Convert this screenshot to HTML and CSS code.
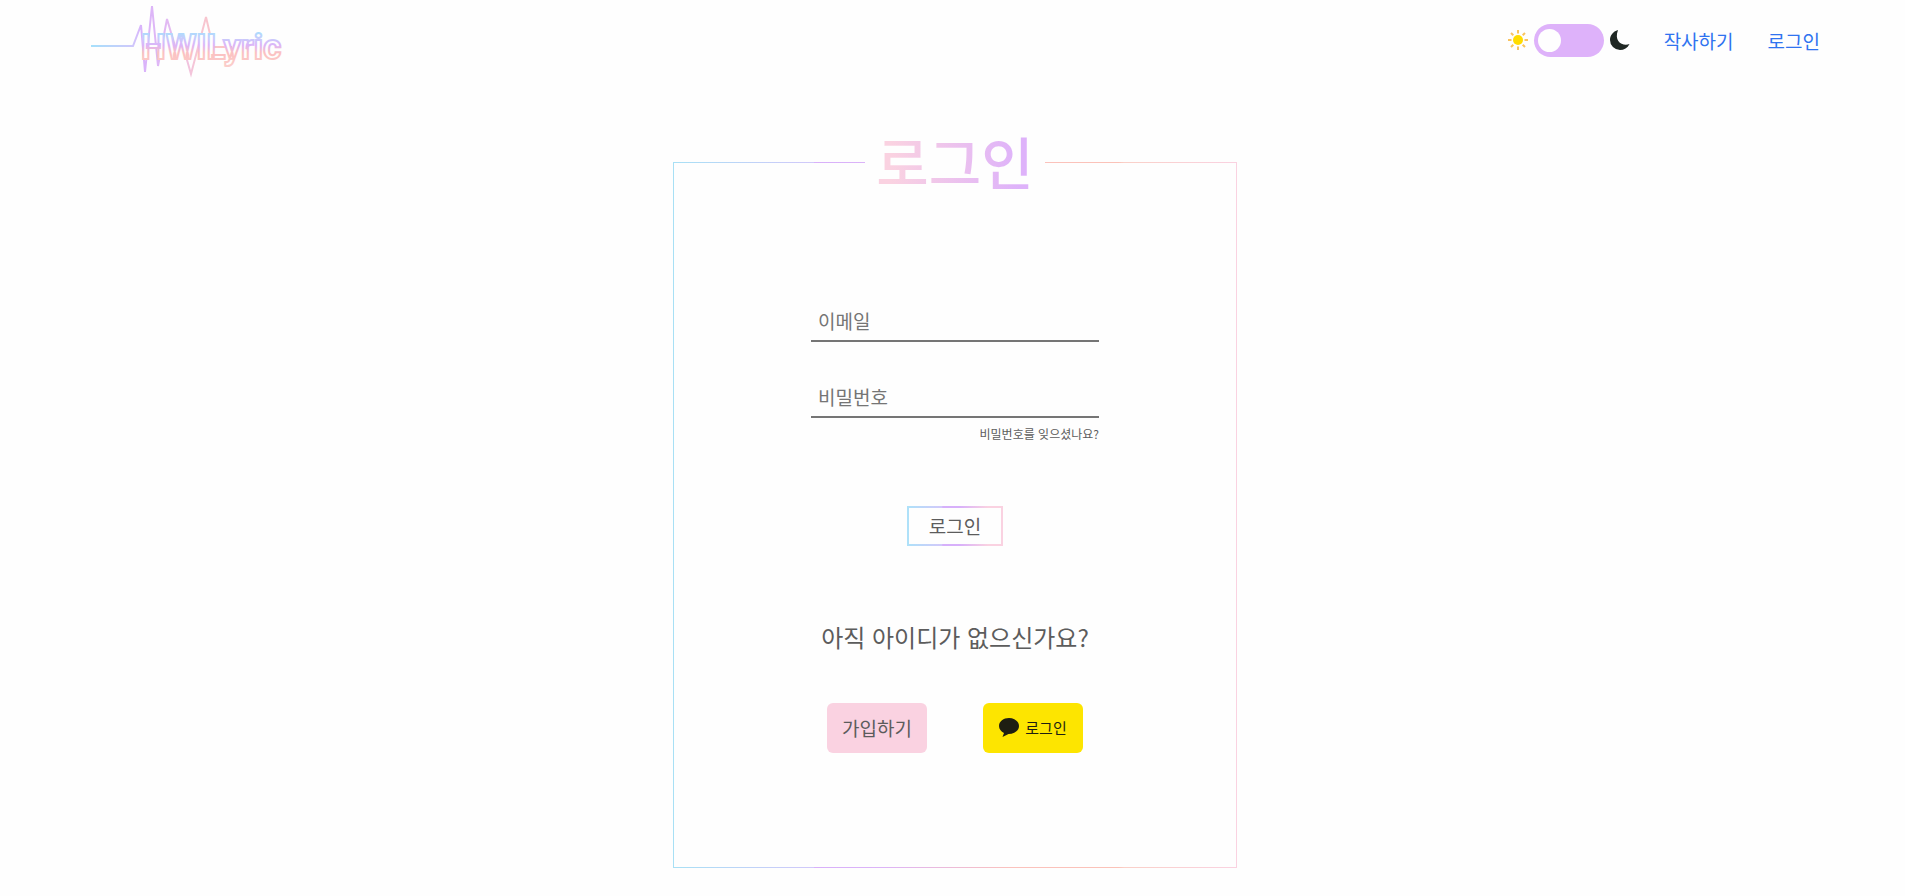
FILE: index.html
```html
<!DOCTYPE html>
<html lang="ko">
<head>
<meta charset="utf-8">
<meta name="viewport" content="width=device-width, initial-scale=1">
<title>HWILyric</title>
<link rel="stylesheet" href="styles.css">
</head>
<body>
<header class="header">
  <a class="logo" href="#" aria-label="HWILyric">
    <svg width="204" height="80" viewBox="90 0 204 80" aria-hidden="true">
      <defs>
        <linearGradient id="pulse" gradientUnits="userSpaceOnUse" x1="91" y1="0" x2="230" y2="0">
          <stop offset="0" stop-color="#a6e0fb"/>
          <stop offset=".3" stop-color="#cfc8fb"/>
          <stop offset=".36" stop-color="#d9b3fb"/>
          <stop offset=".55" stop-color="#e2b9f3"/>
          <stop offset=".75" stop-color="#f6c6d6"/>
          <stop offset="1" stop-color="#fcc4bf"/>
        </linearGradient>
        <linearGradient id="letters" gradientUnits="userSpaceOnUse" x1="0" y1="30" x2="0" y2="68">
          <stop offset="0" stop-color="#a0e2fd"/>
          <stop offset=".22" stop-color="#c8ccfc"/>
          <stop offset=".4" stop-color="#dcb4f8"/>
          <stop offset=".6" stop-color="#fbc1c1"/>
          <stop offset="1" stop-color="#fbcfcc"/>
        </linearGradient>
      </defs>
      <path class="pulse" d="M91 46H133L141 25L145 72L152 6L158 66L167 19L175 46H183L191 74L206 17L213 47H232"/>
      <text class="wordmark" x="141" y="59">HWILyric</text>
    </svg>
  </a>
  <nav class="nav">
    <div class="theme">
      <svg width="20" height="20" viewBox="0 0 20 20" aria-hidden="true">
        <circle cx="10" cy="10" r="5" fill="#ffdc00"/>
        <path d="M10 0V3.500M10 16.500V20M0 10H3.500M16.500 10H20M3 3L5.300 5.300M14.700 14.700L17 17M17 3L14.700 5.300M5.300 14.700L3 17" stroke="#f9c35f" stroke-width="2"/>
      </svg>
      <input class="switch" type="checkbox" role="switch" aria-label="다크 모드">
      <svg width="20" height="20" viewBox="0 0 20 20" aria-hidden="true">
        <path d="M8 0C2.800 1.500 0 5.500 0 10A10 10 0 0 0 10 20C14 20 17.500 18 19.500 14C13 16.500 3.500 12 8 0Z" fill="#1f2723"/>
      </svg>
    </div>
    <a class="nav-link" href="#">작사하기</a>
    <a class="nav-link" href="#">로그인</a>
  </nav>
</header>
<main class="main">
  <form class="card">
    <h1 class="title"><span class="title-text">로그인</span></h1>
    <div class="fields">
      <input class="field" type="email" placeholder="이메일" aria-label="이메일">
      <input class="field" type="password" placeholder="비밀번호" aria-label="비밀번호">
      <a class="forgot" href="#">비밀번호를 잊으셨나요?</a>
    </div>
    <button class="submit" type="submit">로그인</button>
    <p class="question">아직 아이디가 없으신가요?</p>
    <div class="actions">
      <button class="action join" type="button">가입하기</button>
      <button class="action kakao" type="button">
        <svg width="20" height="19" viewBox="0 0 20 19" aria-hidden="true">
          <path d="M10 0C4.500 0 0 3.500 0 8C0 11 2 13.500 5 15L3.500 19L9.500 16C15.500 16 20 12.500 20 8C20 3.500 15.500 0 10 0Z" fill="#1e1e12"/>
        </svg>
        로그인
      </button>
    </div>
  </form>
</main>
</body>
</html>
```
FILE: styles.css
```css
* {
  box-sizing: border-box;
}

body {
  margin: 0;
  background: #fefefe;
  color: #5c5c5c;
  font-family: "Noto Sans CJK KR", sans-serif;
  font-size: 19px;
}

a {
  text-decoration: none;
}

button,
input {
  font: inherit;
}

.header {
  display: flex;
  justify-content: space-between;
  align-items: center;
  padding: 0 85px 0 90px;
}

.logo {
  display: flex;
}

.pulse {
  fill: none;
  stroke: url(#pulse);
  stroke-width: 2;
}

.wordmark {
  fill: #fefefe;
  stroke: url(#letters);
  stroke-width: 2;
  font-family: Roboto, sans-serif;
  font-size: 35px;
  font-weight: 700;
}

.nav {
  display: flex;
  align-items: center;
  gap: 34px;
}

.theme {
  display: flex;
  align-items: center;
  gap: 6px;
}

.switch {
  appearance: none;
  display: flex;
  align-items: center;
  width: 70px;
  height: 33px;
  margin: 0;
  padding: 4px;
  border-radius: 17px;
  background: #deb2fa;
  cursor: pointer;
}

.switch::before {
  content: "";
  width: 23px;
  height: 23px;
  border-radius: 50%;
  background: #fefefe;
}

.switch:checked {
  justify-content: flex-end;
}

.nav-link {
  color: #2f73f0;
}

.main {
  display: flex;
  justify-content: center;
  padding: 82px 0 24px 5px;
}

.card {
  display: flex;
  flex-direction: column;
  align-items: center;
  width: 100%;
  max-width: 564px;
  padding-bottom: 114px;
  border: 1px solid;
  border-image: linear-gradient(90deg, #a8e0f5, #d2c8fa 25%, #d8b0fa 25%, #dcb4f8 37%, #fbc2bd 60%, #fbc2b8 79%, #fad0c8 80%, #fad2e1) 1;
}

.title {
  margin: -31px 0 0;
  padding: 0 11px;
  background: #fefefe;
  font-size: 57px;
  font-weight: 500;
  line-height: 56px;
}

.title-text {
  display: block;
  padding-bottom: 4px;
  background: linear-gradient(90deg, #fad2e1 10%, #deb2fa 90%);
  background-clip: text;
  color: transparent;
}

.fields {
  display: flex;
  flex-direction: column;
  width: 288px;
  margin-top: 108px;
}

.field {
  width: 100%;
  height: 42px;
  padding: 0 7px;
  border: 0;
  border-bottom: 2px solid #757575;
  border-radius: 0;
  background: transparent;
  color: #5c5c5c;
}

.field + .field {
  margin-top: 34px;
}

.field::placeholder {
  color: #757575;
}

.forgot {
  align-self: flex-end;
  margin-top: 7px;
  color: #5c5c5c;
  font-size: 12px;
  line-height: 18px;
}

.submit {
  width: 96px;
  height: 40px;
  margin-top: 63px;
  padding: 0 0 2px;
  border: 2px solid;
  border-image: linear-gradient(90deg, #aee1f9, #d2c8fa 36%, #d6b0fb 37%, #d8b0fa 55%, #fad2e1 85%) 1;
  background: transparent;
  color: #5c5c5c;
}

.question {
  margin: 73px 0 0;
  font-size: 24px;
  line-height: 36px;
}

.actions {
  display: flex;
  gap: 56px;
  margin-top: 48px;
}

.action {
  display: flex;
  justify-content: center;
  align-items: center;
  gap: 6px;
  width: 100px;
  height: 50px;
  padding: 0 0 2px;
  border: 0;
  border-radius: 6px;
}

.join {
  background: #fad2e1;
  color: #5c5c5c;
}

.kakao {
  background: #fde500;
  color: #1e1e12;
  font-size: 15px;
}
```
